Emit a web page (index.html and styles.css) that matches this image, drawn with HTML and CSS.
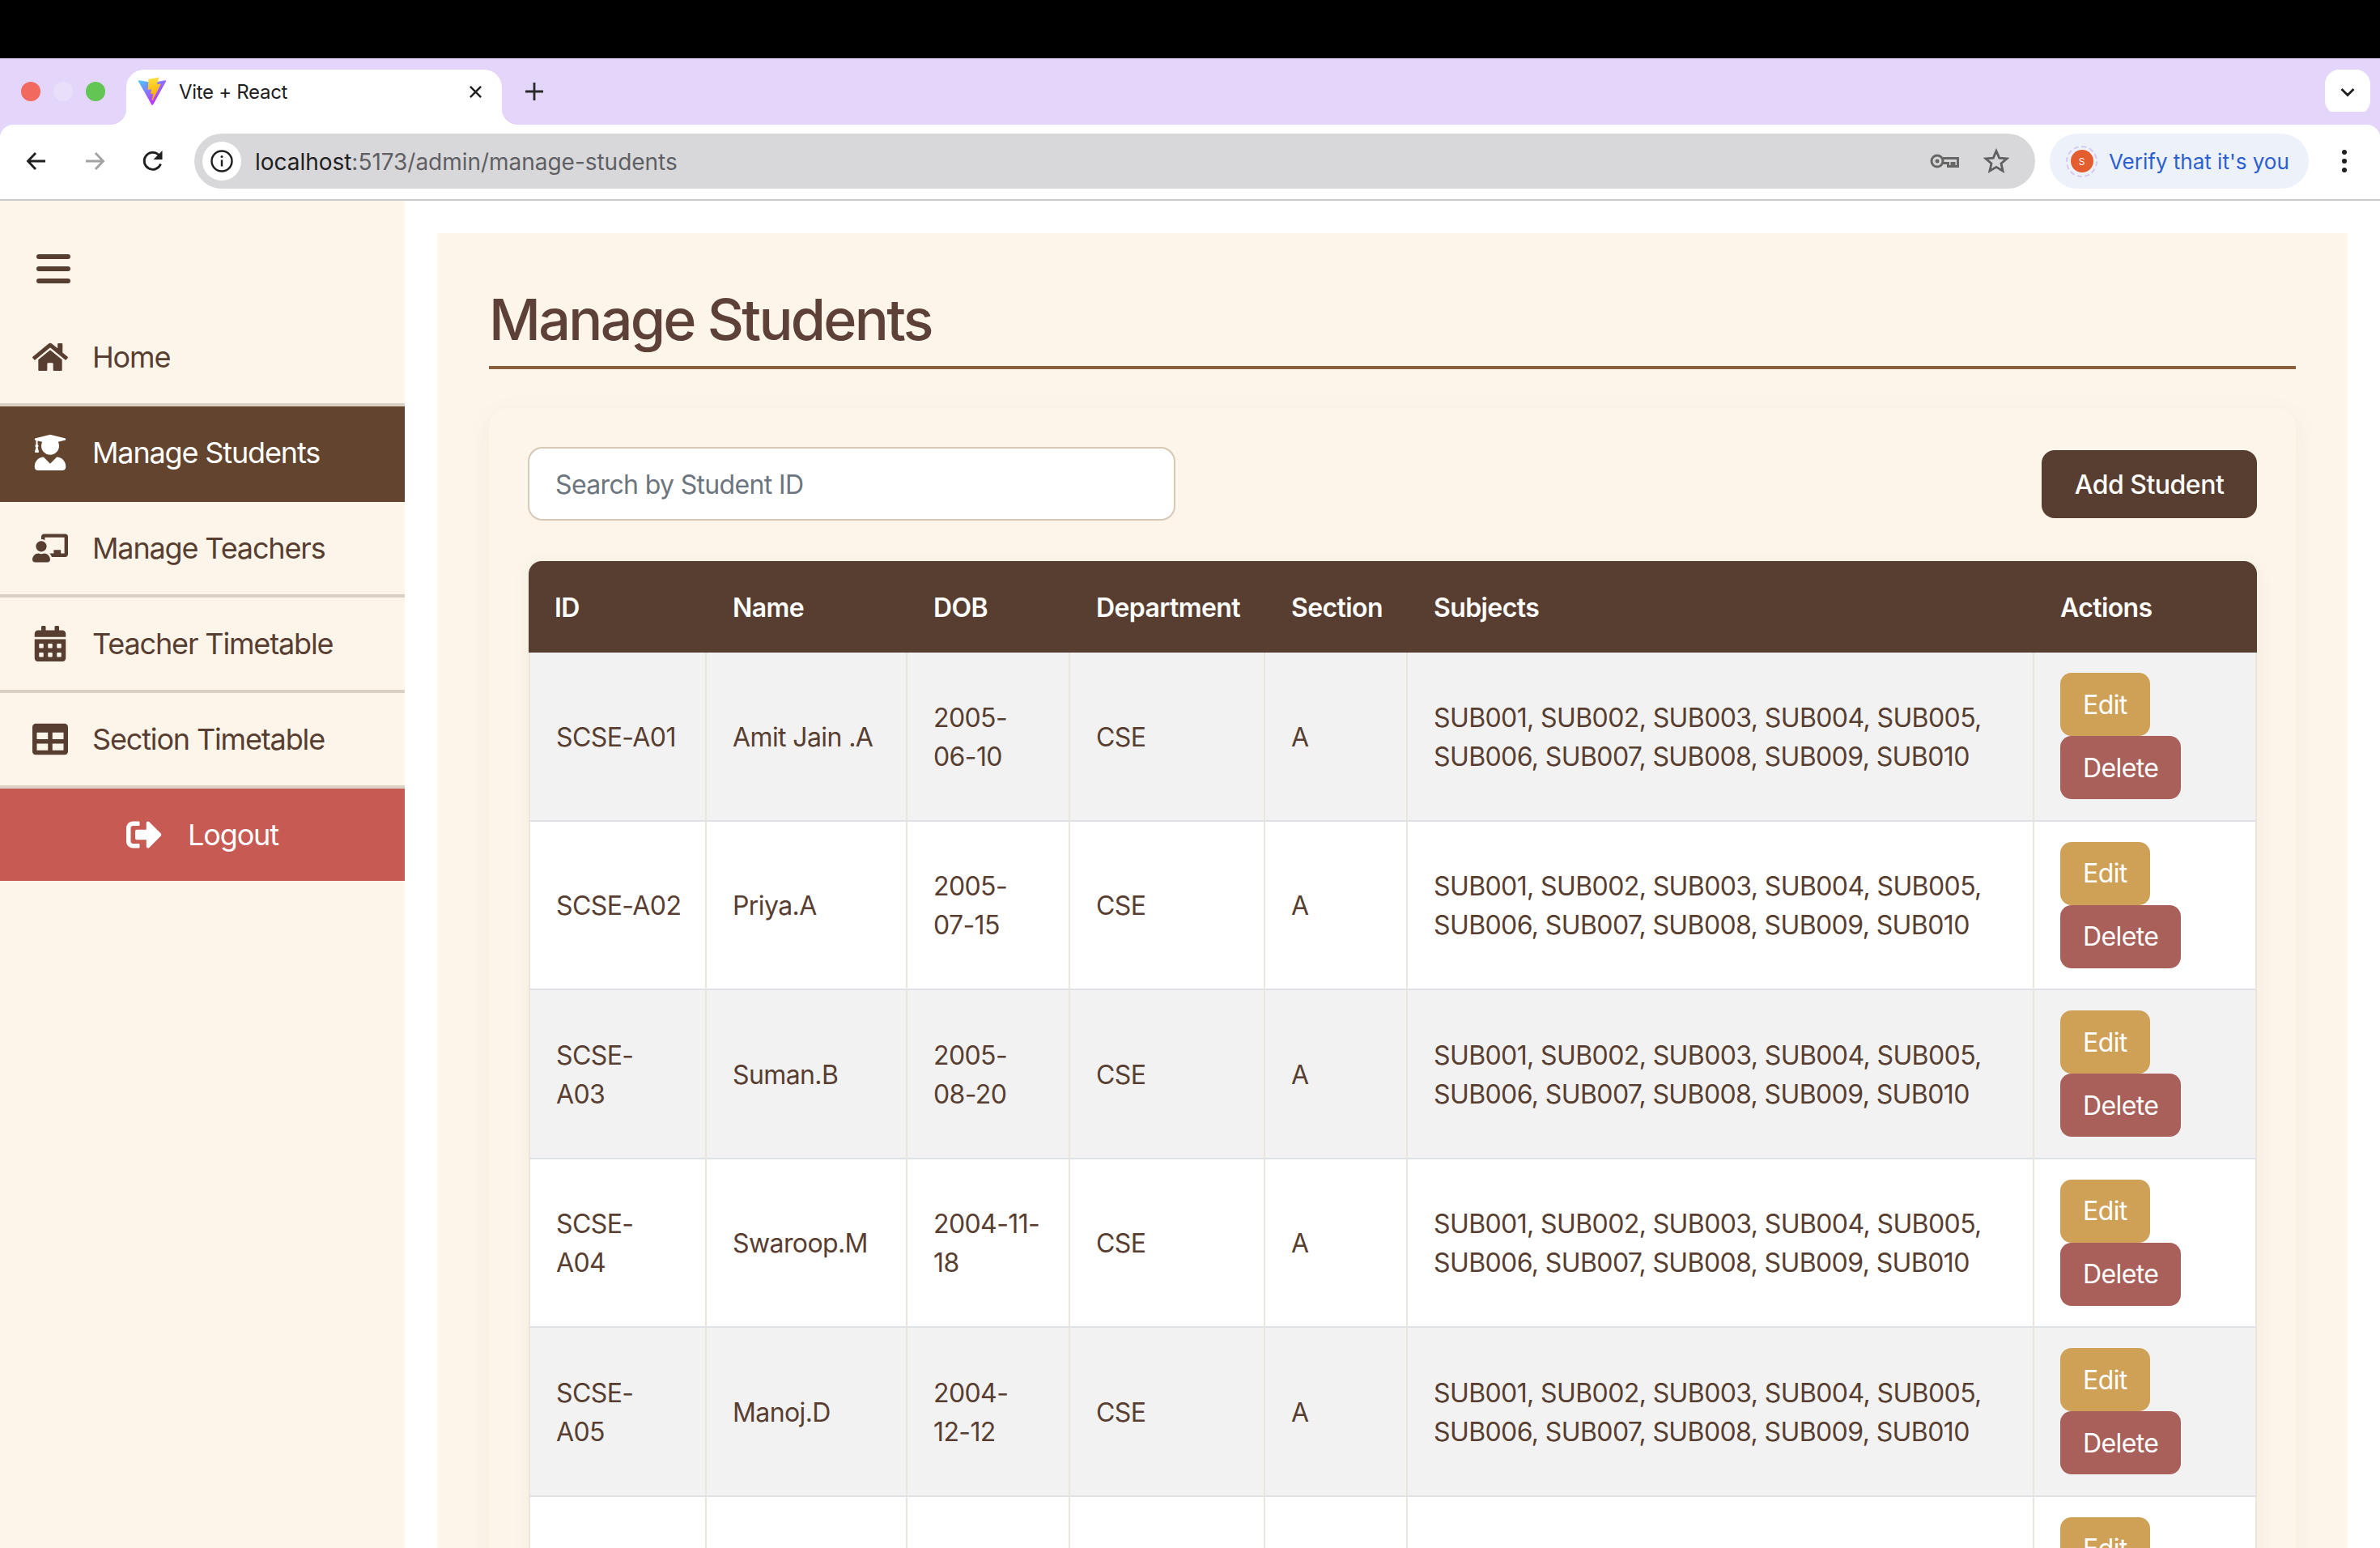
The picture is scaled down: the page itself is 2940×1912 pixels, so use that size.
FILE: index.html
```html
<!DOCTYPE html>
<html lang="en">
<head>
    <meta charset="UTF-8">
    <title>Vite + React</title>
    <link rel="stylesheet" href="styles.css">
</head>
<body>
    <div class="os-bar"></div>
    <div class="tab-strip">
        <div class="lights">
            <span class="light light-red"></span>
            <span class="light light-idle"></span>
            <span class="light light-green"></span>
        </div>
        <div class="tab">
            <svg class="favicon" viewBox="0 0 410 404">
                <defs>
                    <linearGradient id="vite-a" x1="6" y1="33" x2="235" y2="344" gradientUnits="userSpaceOnUse">
                        <stop offset="0" stop-color="#41D1FF"/>
                        <stop offset="1" stop-color="#BD34FE"/>
                    </linearGradient>
                    <linearGradient id="vite-b" x1="194" y1="8" x2="236" y2="293" gradientUnits="userSpaceOnUse">
                        <stop offset="0" stop-color="#FFEA83"/>
                        <stop offset="0.08" stop-color="#FFDD35"/>
                        <stop offset="1" stop-color="#FFA800"/>
                    </linearGradient>
                </defs>
                <path fill="url(#vite-a)" d="M399.641 59.5246L215.643 388.545C211.844 395.338 202.084 395.378 198.228 388.618L10.5817 59.5563C6.38087 52.1896 12.6802 43.2665 21.0281 44.7586L205.223 77.6824C206.398 77.8924 207.601 77.8904 208.776 77.6763L389.119 44.8058C397.439 43.2894 403.768 52.1434 399.641 59.5246Z"/>
                <path fill="url(#vite-b)" d="M292.965 1.5744L156.801 28.2552C154.563 28.6937 152.906 30.5903 152.771 32.8664L144.395 174.33C144.198 177.662 147.258 180.248 150.51 179.498L188.42 170.749C191.967 169.931 195.172 173.055 194.443 176.622L183.18 231.775C182.422 235.487 185.907 238.661 189.532 237.56L212.947 230.446C216.577 229.344 220.065 232.527 219.297 236.242L201.398 322.875C200.278 328.294 207.486 331.249 210.492 326.603L212.5 323.5L323.454 102.072C325.312 98.3645 322.108 94.137 318.036 94.9228L279.014 102.454C275.347 103.161 272.227 99.746 273.262 96.1583L298.731 7.86689C299.767 4.27314 296.636 0.855181 292.965 1.5744Z"/>
            </svg>
            <span class="tab-title">Vite + React</span>
            <svg class="tab-close" viewBox="0 0 18 18"><path d="M2 2l14 14M16 2L2 16"/></svg>
        </div>
        <svg class="new-tab" viewBox="0 0 22 22"><path d="M11 0v22M0 11h22"/></svg>
        <div class="tab-menu">
            <svg viewBox="0 0 18 12"><path d="M1.5 2L9 9.5 16.5 2"/></svg>
        </div>
    </div>
    <div class="toolbar">
        <svg class="nav-icon" viewBox="0 0 28 28"><path d="M25 14H4M13 4L3.5 14 13 24"/></svg>
        <svg class="nav-icon nav-off" viewBox="0 0 28 28"><path d="M3 14h21M15 4l9.500 10L15 24"/></svg>
        <svg class="nav-icon" viewBox="0 0 28 28"><path d="M23.500 17.500A10.500 10.500 0 1 1 20.500 5.800L24 9"/><path class="nav-fill" d="M25.500 1v11H14.500z"/></svg>
        <div class="omnibox">
            <span class="site-info">
                <svg viewBox="0 0 30 30"><circle cx="15" cy="15" r="12.500"/><path d="M15 13.500v8"/><circle class="dot" cx="15" cy="9.500" r="1.500"/></svg>
            </span>
            <span class="url"><span class="url-host">localhost</span>:5173/admin/manage-students</span>
            <svg class="key-icon" viewBox="0 0 36 20"><circle cx="9" cy="10" r="7"/><circle class="key-hole" cx="9" cy="10" r="2.500"/><path d="M16 6.500H34.500V16.500H30V12.500H27V16.500H22.500V12.500H16"/></svg>
            <svg class="star-icon" viewBox="0 0 32 32"><path d="M16 3.500l3.700 8.600 9.300.8-7 6.100 2.100 9.100-8.100-4.800-8.100 4.800 2.100-9.100-7-6.100 9.300-.8z"/></svg>
        </div>
        <div class="verify-pill">
            <span class="avatar-ring"><span class="avatar">S</span></span>
            <span>Verify that it's you</span>
        </div>
        <div class="kebab"><span></span><span></span><span></span></div>
    </div>

    <div class="app">
        <aside class="sidebar">
            <div class="burger"><span></span><span></span><span></span></div>
            <a class="side-item">
                <svg class="side-icon" viewBox="0 0 576 512"><path d="M280.37 148.26L96 300.11V464a16 16 0 0 0 16 16l112.06-.29a16 16 0 0 0 15.92-16V368a16 16 0 0 1 16-16h64a16 16 0 0 1 16 16v95.64a16 16 0 0 0 16 16.05L464 480a16 16 0 0 0 16-16V300L295.67 148.26a12.19 12.19 0 0 0-15.3 0zM571.6 251.47L488 182.56V44.05a12 12 0 0 0-12-12h-56a12 12 0 0 0-12 12v72.61L318.47 43a48 48 0 0 0-61 0L4.34 251.47a12 12 0 0 0-1.6 16.9l25.5 31A12 12 0 0 0 45.15 301l235.22-193.74a12.19 12.19 0 0 1 15.3 0L530.9 301a12 12 0 0 0 16.9-1.6l25.5-31a12 12 0 0 0-1.7-16.93z"/></svg>
                <span>Home</span>
            </a>
            <a class="side-item is-active">
                <svg class="side-icon" viewBox="0 0 448 512"><path d="M319.4 320.6L224 416l-95.4-95.4C57.1 323.7 0 382.2 0 454.4v9.6c0 26.5 21.5 48 48 48h352c26.5 0 48-21.5 48-48v-9.6c0-72.2-57.1-130.7-128.6-133.8zM13.6 79.8l6.4 1.5v58.4c-7 4.2-12 11.5-12 20.3 0 8.4 4.6 15.4 11.1 19.7L3.5 242c-1.7 6.9 2.1 14 7.6 14h41.8c5.5 0 9.3-7.1 7.6-14l-15.6-62.3C51.4 175.4 56 168.4 56 160c0-8.8-5-16.1-12-20.3V87.1l66 15.9c-8.6 17.2-14 36.4-14 57 0 70.7 57.3 128 128 128s128-57.3 128-128c0-20.6-5.3-39.8-14-57l96.3-23.2c18.2-4.4 18.2-27.1 0-31.5l-190.4-46c-13-3.1-26.7-3.1-39.7 0L13.6 48.2c-18.1 4.4-18.1 27.2 0 31.6z"/></svg>
                <span>Manage Students</span>
            </a>
            <a class="side-item">
                <svg class="side-icon" viewBox="0 0 640 512"><path d="M208 352c-2.39 0-4.78.35-7.06 1.09C187.98 357.3 174.35 360 160 360c-14.35 0-27.98-2.7-40.95-6.91-2.28-.74-4.66-1.09-7.05-1.09C49.94 352-.33 402.48 0 464.62.14 490.88 21.73 512 48 512h224c26.27 0 47.86-21.12 48-47.38.33-62.14-49.94-112.62-112-112.62zm-48-32c53.02 0 96-42.98 96-96s-42.98-96-96-96-96 42.98-96 96 42.98 96 96 96zM592 0H208c-26.47 0-48 22.25-48 49.59V96c23.42 0 45.1 6.78 64 17.8V64h352v288h-64v-64H384v64h-76.24c19.1 16.69 33.12 38.73 39.69 64H592c26.47 0 48-22.25 48-49.59V49.59C640 22.25 618.47 0 592 0z"/></svg>
                <span>Manage Teachers</span>
            </a>
            <a class="side-item">
                <svg class="side-icon" viewBox="0 0 448 512"><path d="M0 464c0 26.5 21.5 48 48 48h352c26.5 0 48-21.5 48-48V192H0v272zm320-196c0-6.6 5.4-12 12-12h40c6.6 0 12 5.4 12 12v40c0 6.6-5.4 12-12 12h-40c-6.6 0-12-5.4-12-12v-40zm0 128c0-6.6 5.4-12 12-12h40c6.6 0 12 5.4 12 12v40c0 6.6-5.4 12-12 12h-40c-6.6 0-12-5.4-12-12v-40zM192 268c0-6.6 5.4-12 12-12h40c6.6 0 12 5.4 12 12v40c0 6.6-5.4 12-12 12h-40c-6.6 0-12-5.4-12-12v-40zm0 128c0-6.6 5.4-12 12-12h40c6.6 0 12 5.4 12 12v40c0 6.6-5.4 12-12 12h-40c-6.6 0-12-5.4-12-12v-40zM64 268c0-6.6 5.4-12 12-12h40c6.6 0 12 5.4 12 12v40c0 6.6-5.4 12-12 12H76c-6.6 0-12-5.4-12-12v-40zm0 128c0-6.6 5.4-12 12-12h40c6.6 0 12 5.4 12 12v40c0 6.6-5.4 12-12 12H76c-6.6 0-12-5.4-12-12v-40zM400 64h-48V16c0-8.8-7.2-16-16-16h-32c-8.8 0-16 7.2-16 16v48H160V16c0-8.8-7.2-16-16-16h-32c-8.8 0-16 7.2-16 16v48H48C21.5 64 0 85.5 0 112v48h448v-48c0-26.5-21.5-48-48-48z"/></svg>
                <span>Teacher Timetable</span>
            </a>
            <a class="side-item">
                <svg class="side-icon" viewBox="0 0 512 512"><path d="M464 32H48C21.49 32 0 53.49 0 80v352c0 26.51 21.49 48 48 48h416c26.51 0 48-21.49 48-48V80c0-26.51-21.49-48-48-48zM224 416H64v-96h160v96zm0-160H64v-96h160v96zm224 160H288v-96h160v96zm0-160H288v-96h160v96z"/></svg>
                <span>Section Timetable</span>
            </a>
            <a class="logout">
                <svg class="side-icon" viewBox="0 0 512 512"><path d="M497 273L329 441c-15 15-41 4.500-41-17v-96H152c-13.300 0-24-10.700-24-24v-96c0-13.300 10.700-24 24-24h136V88c0-21.400 25.900-32 41-17l168 168c9.300 9.400 9.300 24.600 0 34zM192 436v-40c0-6.600-5.400-12-12-12H96c-17.700 0-32-14.300-32-32V160c0-17.700 14.300-32 32-32h84c6.600 0 12-5.400 12-12V76c0-6.600-5.400-12-12-12H96c-53 0-96 43-96 96v192c0 53 43 96 96 96h84c6.600 0 12-5.400 12-12z"/></svg>
                <span>Logout</span>
            </a>
        </aside>

        <main class="panel">
            <h1 class="page-title">Manage Students</h1>
            <div class="card">
                <div class="card-top">
                    <input class="search" type="text" placeholder="Search by Student ID">
                    <button class="add-btn">Add Student</button>
                </div>
                <div class="table-wrap">
                    <table class="students">
                        <colgroup>
                            <col class="col-id"><col class="col-name"><col class="col-dob"><col class="col-dept"><col class="col-sec"><col class="col-sub"><col class="col-act">
                        </colgroup>
                        <thead>
                            <tr><th>ID</th><th>Name</th><th>DOB</th><th>Department</th><th>Section</th><th>Subjects</th><th>Actions</th></tr>
                        </thead>
                        <tbody>
                            <tr>
                                <td class="nowrap">SCSE-A01</td><td>Amit Jain .A</td><td>2005-06-10</td><td>CSE</td><td>A</td>
                                <td>SUB001, SUB002, SUB003, SUB004, SUB005, SUB006, SUB007, SUB008, SUB009, SUB010</td>
                                <td class="cell-actions"><button class="btn-edit">Edit</button><button class="btn-del">Delete</button></td>
                            </tr>
                            <tr>
                                <td class="nowrap">SCSE-A02</td><td>Priya.A</td><td>2005-07-15</td><td>CSE</td><td>A</td>
                                <td>SUB001, SUB002, SUB003, SUB004, SUB005, SUB006, SUB007, SUB008, SUB009, SUB010</td>
                                <td class="cell-actions"><button class="btn-edit">Edit</button><button class="btn-del">Delete</button></td>
                            </tr>
                            <tr>
                                <td>SCSE-A03</td><td>Suman.B</td><td>2005-08-20</td><td>CSE</td><td>A</td>
                                <td>SUB001, SUB002, SUB003, SUB004, SUB005, SUB006, SUB007, SUB008, SUB009, SUB010</td>
                                <td class="cell-actions"><button class="btn-edit">Edit</button><button class="btn-del">Delete</button></td>
                            </tr>
                            <tr>
                                <td>SCSE-A04</td><td>Swaroop.M</td><td>2004-11-18</td><td>CSE</td><td>A</td>
                                <td>SUB001, SUB002, SUB003, SUB004, SUB005, SUB006, SUB007, SUB008, SUB009, SUB010</td>
                                <td class="cell-actions"><button class="btn-edit">Edit</button><button class="btn-del">Delete</button></td>
                            </tr>
                            <tr>
                                <td>SCSE-A05</td><td>Manoj.D</td><td>2004-12-12</td><td>CSE</td><td>A</td>
                                <td>SUB001, SUB002, SUB003, SUB004, SUB005, SUB006, SUB007, SUB008, SUB009, SUB010</td>
                                <td class="cell-actions"><button class="btn-edit">Edit</button><button class="btn-del">Delete</button></td>
                            </tr>
                            <tr>
                                <td></td><td></td><td></td><td></td><td></td><td></td>
                                <td class="cell-actions"><button class="btn-edit">Edit</button></td>
                            </tr>
                        </tbody>
                    </table>
                </div>
            </div>
        </main>
    </div>
</body>
</html>
```

FILE: styles.css
```css
:root {
    --brown: #583e31;
    --brown-dark: #63452f;
    --cream: #fdf5ea;
    --lilac: #e4d5fb;
    --line: #dbd0c4;
}
* { box-sizing: border-box; }
html, body { height: 100%; }
body {
    margin: 0;
    height: 1912px;
    overflow: hidden;
    background: #fff;
    display: flex;
    flex-direction: column;
    font-family: Inter, "Liberation Sans", sans-serif;
    color: var(--brown);
}

/* browser chrome */
.os-bar { height: 72px; background: #000; flex: none; }
.tab-strip {
    height: 82px;
    flex: none;
    background: var(--lilac);
    display: flex;
    align-items: flex-start;
    padding: 14px 12px 0 26px;
}
.lights { display: flex; gap: 16px; margin-top: 15px; width: 130px; }
.light { width: 24px; height: 24px; border-radius: 50%; }
.light-red { background: #f1695f; }
.light-idle { background: #eadffb; }
.light-green { background: #62c554; }
.tab {
    position: relative;
    width: 464px;
    height: 68px;
    background: #fff;
    border-radius: 22px 22px 0 0;
    display: flex;
    align-items: center;
    padding: 0 24px 14px 14px;
}
.tab::before, .tab::after {
    content: "";
    position: absolute;
    bottom: 0;
    width: 20px;
    height: 20px;
}
.tab::before { left: -20px; background: radial-gradient(circle at 0 0, var(--lilac) 20px, #fff 20.5px); }
.tab::after { right: -20px; background: radial-gradient(circle at 100% 0, var(--lilac) 20px, #fff 20.5px); }
.favicon { width: 36px; height: 36px; flex: none; }
.tab-title { margin-left: 15px; font-size: 24px; color: #1f1f1f; flex: 1; letter-spacing: -0.3px; }
.tab-close { width: 17px; height: 17px; fill: none; stroke: #1f1f1f; stroke-width: 2.6; }
.new-tab { width: 22px; height: 22px; margin: 16px 0 0 29px; fill: none; stroke: #2a2a2a; stroke-width: 2.800; }
.tab-menu {
    margin-left: auto;
    width: 56px;
    height: 56px;
    background: #fff;
    border-radius: 18px;
    display: flex;
    align-items: center;
    justify-content: center;
}
.tab-menu svg { width: 18px; height: 12px; fill: none; stroke: #1f1f1f; stroke-width: 2.800; }

.toolbar {
    height: 94px;
    flex: none;
    background: #fff;
    border-radius: 16px 16px 0 0;
    border-bottom: 2px solid #cbcbcb;
    display: flex;
    align-items: center;
    padding: 0 0 2px 31px;
    box-shadow: 0 -16px 0 0 var(--lilac);
}
.nav-icon { width: 28px; height: 28px; margin-right: 44px; fill: none; stroke: #1f1f1f; stroke-width: 2.800; flex: none; }
.nav-off { stroke: #a2a2a2; }
.nav-fill { fill: #1f1f1f; stroke: none; }
.omnibox {
    width: 2274px;
    height: 68px;
    margin-left: -7px;
    background: #d8d8da;
    border-radius: 34px;
    display: flex;
    align-items: center;
    padding: 0 32px 0 10px;
    flex: none;
}
.site-info {
    width: 48px;
    height: 48px;
    background: #fff;
    border-radius: 50%;
    display: flex;
    align-items: center;
    justify-content: center;
    flex: none;
}
.site-info svg { width: 30px; height: 30px; fill: none; stroke: #1f1f1f; stroke-width: 2.400; }
.site-info .dot { fill: #1f1f1f; stroke: none; }
.url { margin-left: 17px; padding-top: 2px; font-size: 28px; color: #5f5f63; flex: 1; letter-spacing: -0.03px; }
.url-host { color: #1f1f1f; }
.key-icon { width: 36px; height: 20px; fill: none; stroke: #666; stroke-width: 3; flex: none; margin-right: 30px; }
.key-hole { fill: #666; stroke: none; }
.star-icon { width: 32px; height: 32px; fill: none; stroke: #5f5f63; stroke-width: 2.800; flex: none; }
.verify-pill {
    width: 320px;
    height: 68px;
    margin-left: 18px;
    flex: none;
    background: #ecf1fa;
    border-radius: 34px;
    display: flex;
    align-items: center;
    padding-left: 20px;
    gap: 14px;
    color: #2c5fd0;
    font-size: 26px;
}
.avatar-ring {
    width: 39px;
    height: 39px;
    border-radius: 50%;
    border: 2px dashed #d5c8f2;
    display: flex;
    align-items: center;
    justify-content: center;
    flex: none;
}
.avatar {
    width: 28px;
    height: 28px;
    border-radius: 50%;
    background: #e45d2e;
    color: #fff;
    font-size: 12px;
    display: flex;
    align-items: center;
    justify-content: center;
    flex: none;
}
.kebab { display: flex; flex-direction: column; gap: 5px; margin-left: 41px; }
.kebab span { width: 6px; height: 6px; border-radius: 50%; background: #1f1f1f; }

/* app */
.app { flex: 1; display: flex; min-height: 0; }
.sidebar { width: 500px; flex: none; background: var(--cream); }
.burger {
    height: 136px;
    padding: 66px 0 0 45px;
    display: flex;
    flex-direction: column;
    gap: 9px;
}
.burger span { width: 42px; height: 6px; border-radius: 3px; background: var(--brown); }
.side-item {
    height: 118px;
    display: flex;
    align-items: center;
    gap: 30px;
    padding-left: 40px;
    border-bottom: 4px solid var(--line);
    font-size: 36px;
    letter-spacing: -1.150px;
    color: var(--brown);
}
.side-item.is-active { background: var(--brown-dark); color: #fff; border-bottom-color: var(--brown-dark); }
.side-icon { width: 44px; height: 44px; fill: currentColor; flex: none; }
.logout {
    height: 114px;
    background: #c85a54;
    color: #fff;
    font-size: 36px;
    letter-spacing: -1.150px;
    display: flex;
    align-items: center;
    justify-content: center;
    gap: 32px;
}

.panel {
    flex: 1;
    margin: 40px 40px 0;
    padding: 64px 64px 0;
    background: var(--cream);
    min-width: 0;
}
.page-title {
    margin: 0 0 48px;
    height: 104px;
    border-bottom: 4px solid #8b5e3c;
    font-size: 70px;
    font-weight: 500;
    line-height: 86px;
    letter-spacing: -2.700px;
    color: #5d4037;
}
.card {
    background: var(--cream);
    border-radius: 24px;
    padding: 48px;
    box-shadow: 0 8px 32px rgba(90, 62, 49, 0.05);
}
.card-top { display: flex; align-items: center; justify-content: space-between; margin-bottom: 50px; }
.search {
    width: 800px;
    height: 91px;
    border: 2px solid #d8c8b6;
    border-radius: 18px;
    padding: 2px 32px 0;
    background: #fff;
    font: 32px Inter, "Liberation Sans", sans-serif;
    letter-spacing: -0.650px;
}
.search::placeholder { color: #6c757d; opacity: 1; }
.add-btn {
    width: 266px;
    height: 84px;
    padding: 2px 0 0;
    border: none;
    border-radius: 16px;
    background: var(--brown);
    color: #fff;
    font: 500 32px Inter, "Liberation Sans", sans-serif;
    letter-spacing: -0.500px;
}
.table-wrap {
    margin-left: 1px;
    border-radius: 16px 16px 0 0;
    overflow: hidden;
    box-shadow: 0 4px 24px rgba(90, 62, 49, 0.05);
}
.students {
    width: 100%;
    table-layout: fixed;
    border-collapse: separate;
    border-spacing: 0;
    font-size: 32px;
    line-height: 48px;
    letter-spacing: -0.600px;
}
.col-id { width: 220px; }
.col-name { width: 248px; }
.col-dob { width: 201px; }
.col-dept { width: 241px; }
.col-sec { width: 176px; }
.col-sub { width: 774px; }
.students th {
    height: 113px;
    background: var(--brown);
    color: #fff;
    font-weight: 600;
    text-align: left;
    padding: 2px 32px 0;
    white-space: nowrap;
}
.students td {
    height: 208.5px;
    padding: 27px 32px 24px;
    border-bottom: 2px solid #dee2e6;
    border-right: 2px solid #ebe6dc;
    background: #fff;
    vertical-align: middle;
}
.students td.nowrap { white-space: nowrap; }
.students td.cell-actions { padding-top: 25px; vertical-align: top; }
.students tbody tr:nth-child(odd) td { background: #f2f2f2; }
.students td:first-child { border-left: 2px solid #ebe6dc; }
.btn-edit, .btn-del {
    display: block;
    height: 78px;
    border: none;
    border-radius: 14px;
    padding: 0 28px;
    color: #fff;
    font: 32px Inter, "Liberation Sans", sans-serif;
    letter-spacing: -0.600px;
}
.btn-edit { background: #cfa157; }
.btn-del { background: #a9605b; }
```
